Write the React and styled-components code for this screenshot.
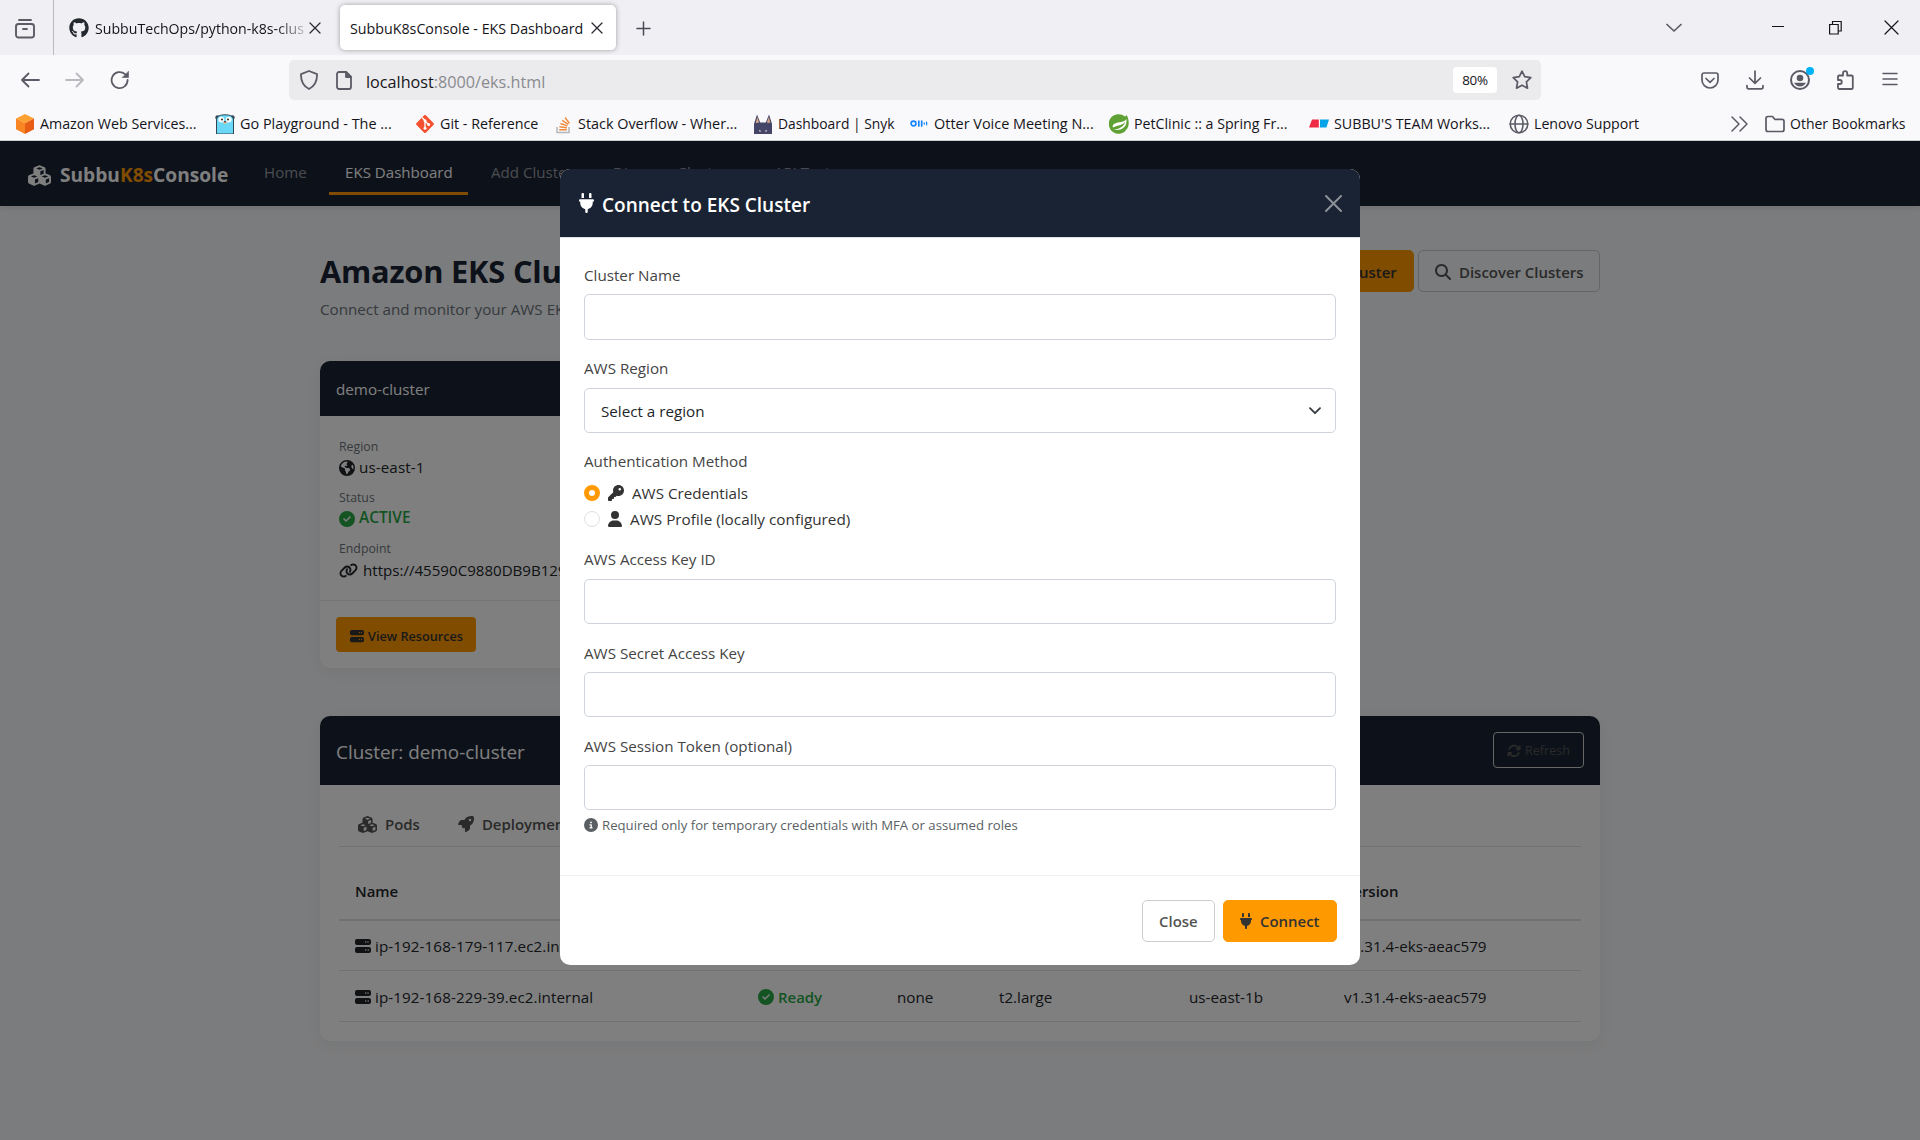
import React from "react";
import styled, { createGlobalStyle, css } from "styled-components";
import {
  FaCubes, FaPlug, FaKey, FaUser, FaEarthAmericas, FaCircleCheck, FaLink,
  FaServer, FaRocket, FaArrowsRotate, FaMagnifyingGlass, FaCircleInfo, FaGithub,
} from "react-icons/fa6";

const navy = "#1a2333";
const orange = "#ff9900";

const Global = createGlobalStyle`
  *, *::before, *::after { box-sizing: border-box; }
  html, body { margin: 0; padding: 0; }
  body {
    width: 1920px;
    height: 1140px;
    overflow: hidden;
    font-family: "Open Sans", "Noto Sans", sans-serif;
    font-size: 15px;
    color: #212529;
  }
  svg { display: block; flex: none; }
`;

const Screen = styled.div`
  width: 1920px;
  height: 1140px;
  display: flex;
  flex-direction: column;
  overflow: hidden;
`;

const Text = styled.span`
  display: block;
  flex: none;
  white-space: nowrap;
  font-size: ${(p) => p.$size || (p.$weight ? 14.95 : 15.2)}px;
  font-weight: ${(p) => p.$weight || 400};
  letter-spacing: ${(p) => p.$track || 0}px;
  color: ${(p) => p.$color || "inherit"};
  line-height: 24px;
`;

/* ---------- browser chrome ---------- */

const TabStrip = styled.div`
  height: 55px;
  flex: none;
  background: #f0f0f4;
  display: flex;
  color: #15141a;
`;

const ViewCell = styled.div`
  width: 54px;
  border-right: 1px solid #b9b9c0;
  padding: 19px 0 0 15px;
`;

const Tab = styled.div`
  display: flex;
  align-items: center;
  height: 45px;
  margin-top: 5px;
  border-radius: 5px;
  ${(p) =>
    p.$active
      ? css`
          width: 276px;
          margin-left: 2px;
          padding-left: 10px;
          background: #fff;
          box-shadow: 0 0 5px rgba(0, 0, 0, 0.35);
        `
      : css`
          width: 284px;
          padding-left: 15px;
        `}
`;

const TabLabel = styled(Text)`
  width: ${(p) => p.$width}px;
  margin: 2px 0 0 ${(p) => p.$left || 0}px;
  ${(p) => p.$fade && css`mask-image: linear-gradient(90deg, #000 86%, transparent 103%);`}
`;

const StripEnd = styled.div`
  flex: 1;
  display: flex;
  justify-content: space-between;
  padding: 20px 21px 0 20px;
`;

const WindowControls = styled.div`
  display: flex;
  align-items: flex-start;
`;

const Slot = styled.div`
  margin-left: ${(p) => p.$gap || 0}px;
  padding-bottom: ${(p) => p.$lift || 0}px;
`;

const Toolbar = styled.div`
  height: 50px;
  flex: none;
  background: #f9f9fb;
  display: flex;
  align-items: center;
  color: #5b5b66;
  padding: 0 22px 0 20px;
`;

const NavButtons = styled.div`
  display: flex;
  align-items: center;
  gap: 25px;
  width: 269px;
`;

const UrlBar = styled.div`
  width: 1252px;
  height: 40px;
  border-radius: 5px;
  background: #ebebed;
  display: flex;
  align-items: center;
  padding: 0 9px 0 10px;
  color: #5b5b66;
`;

const Url = styled(Text)`
  flex: 1;
  margin: 3px 0 0 14px;
  color: #8a8a8f;
  b {
    font-weight: 400;
    color: #15141a;
  }
`;

const ZoomPill = styled.div`
  width: 44px;
  height: 26px;
  margin-right: 15px;
  border-radius: 4px;
  background: #fff;
  color: #15141a;
  font-size: 13.4px;
  letter-spacing: -0.3px;
  line-height: 27px;
  text-align: center;
`;

const ToolbarIcons = styled.div`
  display: flex;
  align-items: center;
  margin-left: auto;
`;

const Bookmarks = styled.div`
  height: 36px;
  flex: none;
  background: #f9f9fb;
  border-bottom: 1px solid #c9cfca;
  display: flex;
  align-items: center;
  padding-left: 15px;
  color: #15141a;
`;

const Bookmark = styled.div`
  display: flex;
  align-items: center;
  gap: 5px;
  flex: 0 0 ${(p) => p.$width}px;
  height: 100%;
  padding-top: 2px;
  svg { width: 20px; height: 20px; }
`;

/* ---------- page ---------- */

const Page = styled.div`
  flex: 1;
  position: relative;
  background: #f7f8fa;
  overflow: hidden;
`;

const Navbar = styled.nav`
  height: 65px;
  background: ${navy};
  box-shadow: 0 2px 5px rgba(0, 0, 0, 0.1);
  display: flex;
  align-items: flex-start;
  padding-left: 28px;
`;

const Brand = styled.div`
  display: flex;
  align-items: center;
  width: 220px;
  height: 65px;
  gap: 9px;
  color: #fff;
  padding-top: 3px;
  em { font-style: normal; color: ${orange}; }
`;

const NavLink = styled.div`
  height: 41px;
  margin: 13px 7px 0 0;
  padding: 6px 0 0 16px;
  width: ${(p) => p.$width}px;
  color: ${(p) => (p.$active ? "#fff" : "rgba(255,255,255,0.55)")};
  border-bottom: 3px solid ${(p) => (p.$active ? orange : "transparent")};
`;

const Container = styled.main`
  width: 1280px;
  margin: 0 auto;
`;

const PageHead = styled.header`
  height: 155px;
  padding-top: 44px;
  display: flex;
  justify-content: space-between;
  align-items: flex-start;
`;

const Title = styled.h1`
  margin: 0 0 5px;
  font-size: 30.8px;
  line-height: 42px;
  font-weight: 700;
  letter-spacing: -0.2px;
  color: ${navy};
  white-space: nowrap;
`;

const Actions = styled.div`
  display: flex;
  gap: 4px;
`;

const Button = styled.div`
  height: 42px;
  display: flex;
  align-items: center;
  gap: 8px;
  width: ${(p) => p.$width}px;
  padding: ${(p) => p.$drop ?? 2}px 0 0 16px;
  border-radius: 5px;
  border: 1px solid ${(p) => (p.$primary ? orange : p.$edge || "#ccc")};
  background: ${(p) => (p.$primary ? orange : "transparent")};
  color: ${(p) => (p.$primary ? "#333" : "#545454")};
`;

/* The plug and user glyphs are narrower than their height. */
const PlugIcon = styled(FaPlug)`
  width: ${(p) => p.size * 0.75}px;
`;

const UserIcon = styled(FaUser)`
  width: ${(p) => p.size * 0.875}px;
`;

const Card = styled.section`
  width: ${(p) => p.$width}px;
  margin-bottom: 48px;
  border-radius: 10px;
  background: #fff;
  box-shadow: 0 4px 15px rgba(0, 0, 0, 0.05);
  overflow: hidden;
`;

const CardHead = styled.div`
  height: ${(p) => p.$height}px;
  background: ${navy};
  color: #fff;
  display: flex;
  align-items: center;
  justify-content: space-between;
  padding: 0 16px;
`;

const CardTitle = styled(Text)`
  margin-top: 3px;
`;

const Details = styled.div`
  height: 185px;
  padding: 20px 20px 0 19px;
  border-bottom: 1px solid #e6e8ea;
`;

const Detail = styled.div`
  height: 51px;
`;

const DetailLabel = styled(Text)`
  font-size: 12.3px;
  line-height: 22px;
  color: #6c757d;
`;

const IconText = styled.div`
  display: flex;
  align-items: center;
  gap: ${(p) => p.$gap ?? 4}px;
  color: ${(p) => p.$color || "inherit"};
`;

const DetailValue = styled(IconText)`
  height: 20px;
  ${Text} { margin-bottom: ${(p) => p.$rise ?? 2}px; }
`;

const CardFoot = styled.div`
  height: 67px;
  padding: 16px;
`;

const SmallButton = styled.div`
  width: 140px;
  height: 35px;
  border-radius: 4px;
  background: ${orange};
  color: #333;
  display: flex;
  align-items: center;
  gap: 4px;
  padding: 3px 0 0 14px;
`;

const RefreshButton = styled.div`
  width: 91px;
  height: 36px;
  margin-bottom: 2px;
  border: 1px solid #ccc;
  border-radius: 4px;
  color: #545454;
  display: flex;
  align-items: center;
  gap: 4px;
  padding: 2px 0 0 13px;
`;

const CardBody = styled.div`
  height: 256px;
  padding: 0 19px;
`;

const ResourceTabs = styled.div`
  height: 62px;
  border-bottom: 1px solid #dee2e6;
  display: flex;
  align-items: flex-start;
  padding: 27px 0 0 19px;
  gap: 38px;
  color: #545454;
`;

const Row = styled.div`
  display: grid;
  grid-template-columns: 403px 139px 102px 190px 155px 1fr;
  align-items: center;
  height: ${(p) => p.$height}px;
  padding-left: 16px;
  padding-top: ${(p) => p.$drop || 0}px;
  border-bottom: ${(p) => (p.$head ? 2 : 1)}px solid #dee2e6;
  color: #212529;
`;

/* ---------- modal ---------- */

const Backdrop = styled.div`
  position: absolute;
  inset: 0;
  background: rgba(0, 0, 0, 0.5);
  display: flex;
  justify-content: center;
  align-items: flex-start;
  padding-top: 28px;
`;

const Modal = styled.div`
  width: 800px;
  height: 796px;
  border-radius: 10px;
  background: #fff;
  overflow: hidden;
`;

const ModalHead = styled.div`
  height: 69px;
  background: ${navy};
  border-bottom: 1px solid #dee2e6;
  color: #fff;
  display: flex;
  justify-content: space-between;
  align-items: center;
  padding: 0 18px 0 19px;
`;

const ModalTitle = styled(Text)`
  margin-top: 4px;
`;

const ModalBody = styled.div`
  height: 638px;
  border-bottom: 1px solid #eef0f1;
  padding: 25px 24px 0;
`;

const Field = styled.div`
  height: ${(p) => p.$height || 93}px;
`;

const Label = styled(Text)`
  color: #454545;
  margin-bottom: ${(p) => p.$below ?? 7}px;
`;

const Input = styled.div`
  height: ${(p) => p.$height || 45}px;
  border: 1px solid #ced4da;
  border-radius: 5px;
  background: #fff;
  display: flex;
  align-items: center;
  justify-content: space-between;
  padding: 0 14px 0 16px;
`;

const RadioRow = styled.div`
  display: flex;
  align-items: center;
  height: 26px;
  color: #333;
`;

const Radio = styled.span`
  width: 16px;
  height: 16px;
  margin-right: 8px;
  border-radius: 50%;
  background: #fff;
  border: ${(p) => (p.$on ? `5px solid ${orange}` : "1px solid #e0e1e5")};
`;

const Help = styled(IconText)`
  margin-top: 3px;
  color: #5a5f64;
`;

const ModalFoot = styled.div`
  display: flex;
  justify-content: flex-end;
  gap: 8px;
  padding: 24px 23px 0;
`;

/* ---------- drawings ---------- */

const Stroke = ({ w, h, sw = 1.8, children, color = "currentColor" }) => (
  <svg width={w} height={h} viewBox={`0 0 ${w} ${h}`} fill="none" stroke={color}
    strokeWidth={sw} strokeLinecap="round" strokeLinejoin="round">{children}</svg>
);

const ViewIcon = () => (
  <Stroke w={20} h={20} sw={1.9} color="#5b5b66">
    <path d="M4 1h12" /><rect x="1" y="5" width="18" height="13.5" rx="2.5" /><path d="M8 10h4" />
  </Stroke>
);
const Cross = ({ size = 12, sw = 1.3, color = "#2b2a33" }) => (
  <Stroke w={size} h={size} sw={sw} color={color}>
    <path d={`M1 1L${size - 1} ${size - 1}M${size - 1} 1L1 ${size - 1}`} />
  </Stroke>
);
const Back = () => <Stroke w={20} h={16}><path d="M19 8H2M8.500 1.500L2 8l6.500 6.500" /></Stroke>;
const Forward = () => <Stroke w={20} h={16} color="#b9b9bf"><path d="M1 8h17M11.500 1.500L18 8l-6.500 6.500" /></Stroke>;
const Reload = () => (
  <Stroke w={20} h={20}>
    <path d="M17.600 10A8 8 0 1 1 15 4.200L17 6" />
    <path d="M18.500 1.500V7.500H12.500z" fill="currentColor" strokeWidth="0.600" />
  </Stroke>
);
const Shield = () => <Stroke w={20} h={20}><path d="M10 1L18 4.200C18.300 11 16 16 10 19 4 16 1.700 11 2 4.200z" /></Stroke>;
const PageIcon = () => (
  <Stroke w={16} h={19}>
    <path d="M3 1H10L15 6V16a2 2 0 0 1-2 2H3a2 2 0 0 1-2-2V3a2 2 0 0 1 2-2z" />
    <path d="M10 1V6H15z" fill="currentColor" />
  </Stroke>
);
const Star = () => (
  <Stroke w={20} h={20} sw={1.7}>
    <path d="M10 1.200L12.700 6.700 18.800 7.600 14.400 11.900 15.500 18.200 10 15.200 4.500 18.200 5.600 11.900 1.200 7.600 7.300 6.700z" />
  </Stroke>
);
const Pocket = () => (
  <Stroke w={18} h={17} sw={1.7}>
    <path d="M3 1h12a2 2 0 0 1 2 2v5a8 8 0 0 1-16 0V3a2 2 0 0 1 2-2z" /><path d="M5 6.500l4 3.800 4-3.800" />
  </Stroke>
);
const Download = () => (
  <Stroke w={18} h={20} sw={1.7}>
    <path d="M9 1v12M3.500 8L9 13.300 14.500 8M1 15.500V17a1.800 1.800 0 0 0 1.800 1.800h12.400A1.800 1.800 0 0 0 17 17v-1.500" />
  </Stroke>
);
const Account = () => (
  <svg width="24" height="26" viewBox="0 0 24 26">
    <circle cx="10" cy="14" r="9" fill="none" stroke="#5b5b66" strokeWidth="2" />
    <circle cx="10" cy="12" r="3.300" fill="#5b5b66" />
    <path d="M4 16.800h12c-1.200 2.400-3.400 3.600-6 3.600s-4.800-1.200-6-3.600z" fill="#5b5b66" />
    <circle cx="20" cy="5" r="4" fill="#00b3f4" />
  </svg>
);
const Extension = () => (
  <Stroke w={18} h={20} sw={1.8}>
    <path d="M2 6.500a1 1 0 0 1 1-1H7V3.200a2 2 0 0 1 4.200 0V5.500H15.500a1.300 1.300 0 0 1 1.300 1.300V17.700A1.300 1.300 0 0 1 15.500 19H3.300A1.300 1.300 0 0 1 2 17.700V14H3.800a1.900 1.900 0 0 0 0-4H2z" />
  </Stroke>
);
const Menu = () => <Stroke w={16} h={14} sw={1.5}><path d="M1 1.500h14M1 7h14M1 12.500h14" /></Stroke>;

const AwsBox = () => (
  <svg viewBox="0 0 20 20">
    <path d="M10 0l9 4.500-9 4.700-9-4.700z" fill="#ffa132" />
    <path d="M1 4.500l9 4.700V20l-9-4.700z" fill="#f98422" />
    <path d="M19 4.500l-9 4.700V20l9-4.700z" fill="#e85d13" />
  </svg>
);
const Gopher = () => (
  <svg viewBox="0 0 20 20">
    <circle cx="2.600" cy="3.500" r="2.300" fill="#31464f" /><circle cx="17.400" cy="3.500" r="2.300" fill="#31464f" />
    <path d="M1.500 20V6C2 2 5 .8 10 .8s8 1.200 8.500 5.200v14z" fill="#6cd8f7" stroke="#31464f" strokeWidth="1" />
    <circle cx="6.300" cy="5.600" r="2.900" fill="#fff" /><circle cx="13.700" cy="5.600" r="2.900" fill="#fff" />
    <circle cx="7" cy="5.600" r="1" fill="#222" /><circle cx="13" cy="5.600" r="1" fill="#222" />
    <ellipse cx="10" cy="8.600" rx="2" ry="1.400" fill="#e8c29a" /><ellipse cx="10" cy="7.700" rx="1" ry=".8" fill="#222" />
  </svg>
);
const GitMark = () => (
  <svg viewBox="0 0 20 20">
    <rect x="3.300" y="3.300" width="13.400" height="13.400" rx="1.200" transform="rotate(45 10 10)" fill="#f4502f" />
    <path d="M7 3.500l3 3v8M10 7l3.500 3.500" stroke="#fff" strokeWidth="1.300" fill="none" />
    <circle cx="10" cy="6.800" r="1.500" fill="#fff" /><circle cx="10" cy="14.300" r="1.500" fill="#fff" /><circle cx="13.600" cy="10.500" r="1.500" fill="#fff" />
  </svg>
);
const StackMark = () => (
  <svg viewBox="0 0 20 20">
    <path d="M4 13v5.500h12V13" fill="none" stroke="#b4b7ba" strokeWidth="1.500" />
    <path d="M6.200 15.800h7.600M6.400 12.800l7.500.9M7.400 9.500l7 2.300M9.200 6.300l6.100 4M12 3.500l4.400 5.700" stroke="#f08a3c" strokeWidth="1.400" />
  </svg>
);
const SnykMark = () => (
  <svg viewBox="0 0 20 20">
    <path d="M1 20V10L4 .5l3.200 8h5.600L16 .5l3 9.500v10z" fill="#454568" />
    <path d="M2.800 9L4.200 3l2 5.500z" fill="#d9a988" /><path d="M17.200 9L15.800 3l-2 5.500z" fill="#d9a988" />
    <path d="M6.500 16l.9 1.800M13.500 16l-.9 1.800" stroke="#d8cdd0" strokeWidth="1.200" />
  </svg>
);
const OtterMark = () => (
  <svg viewBox="0 0 20 20" fill="none" stroke="#1685ff" strokeLinecap="round">
    <circle cx="4.500" cy="9.500" r="2.400" strokeWidth="1.700" />
    <path d="M9.800 7v5M12.700 7v5" strokeWidth="1.700" /><path d="M15.300 9v1M17.600 8.200v2.600" strokeWidth="1.300" />
  </svg>
);
const SpringMark = () => (
  <svg viewBox="0 0 20 20">
    <path d="M17.600 1C20 5 20.600 10.500 18.200 14.500A9.800 9.800 0 1 1 16 2.600 6 6 0 0 0 17.600 1z" fill="#5fa134" />
    <path d="M17.400 5C18.500 12.500 13 17.200 5 15.800 12.500 14.800 15.300 11 16.200 7.800 13.500 11.500 9 11.200 4 13.500 2.500 9.500 8 8.500 12 8 15 7.600 16.600 6.400 17.400 5z" fill="#fff" />
  </svg>
);
const TeamMark = () => (
  <svg viewBox="0 0 20 20">
    <path d="M3 5.500h6.800v8H0z" fill="#ee2a45" /><path d="M11 5.500h9l-2.600 8H11z" fill="#05a4e8" />
  </svg>
);
const Globe = () => (
  <Stroke w={20} h={20} sw={1.600} color="#5b5b66">
    <circle cx="10" cy="10" r="8.800" /><ellipse cx="10" cy="10" rx="4" ry="8.800" /><path d="M1.200 10h17.600" />
  </Stroke>
);
const Folder = () => (
  <Stroke w={20} h={20} sw={1.700} color="#5b5b66">
    <path d="M3 2.500h4.500l2.300 2.800H17a2 2 0 0 1 2 2V15.500a2 2 0 0 1-2 2H3a2 2 0 0 1-2-2v-11a2 2 0 0 1 2-2z" />
  </Stroke>
);

const bookmarks = [
  [AwsBox, "Amazon Web Services...", 200, 14.25],
  [Gopher, "Go Playground - The ...", 200, 14.45],
  [GitMark, "Git - Reference", 138, 14.3],
  [StackMark, "Stack Overflow - Wher...", 200, 14.4],
  [SnykMark, "Dashboard | Snyk", 156, 13.85],
  [OtterMark, "Otter Voice Meeting N...", 200, 14.45],
  [SpringMark, "PetClinic :: a Spring Fr...", 200, 14.2],
  [TeamMark, "SUBBU'S TEAM Works...", 200, 14.25],
  [Globe, "Lenovo Support", 221, 14.2],
];

const Nav = ({ children, ...rest }) => <NavLink {...rest}><Text $size={15.1}>{children}</Text></NavLink>;

const NodeRow = ({ name, zone, height, drop }) => (
  <Row $height={height} $drop={drop}>
    <IconText><FaServer size={16} /><Text $track={0.09}>{name}</Text></IconText>
    <IconText $color="#28a745"><FaCircleCheck size={16} /><Text $weight={600}>Ready</Text></IconText>
    <Text>none</Text>
    <Text>t2.large</Text>
    <Text>{zone}</Text>
    <Text>v1.31.4-eks-aeac579</Text>
  </Row>
);

export default function App() {
  return (
    <Screen>
      <Global />
      <TabStrip>
        <ViewCell><ViewIcon /></ViewCell>
        <Tab>
          <FaGithub size={20} color="#24292f" />
          <TabLabel $size={14.15} $left={6} $width={211} $fade>SubbuTechOps/python-k8s-clus</TabLabel>
          <Slot $gap={3}><Cross /></Slot>
        </Tab>
        <Tab $active>
          <TabLabel $size={14.25} $width={234}>SubbuK8sConsole - EKS Dashboard</TabLabel>
          <Slot $gap={7}><Cross /></Slot>
        </Tab>
        <StripEnd>
          <Stroke w={15} h={17} sw={1.5} color="#4a4a55"><path d="M7.500 2v13M1 8.500h13" /></Stroke>
          <WindowControls>
            <Slot><Stroke w={16} h={15} sw={1.7} color="#5b5b66"><path d="M1 4.500l7 6.500 7-6.500" /></Stroke></Slot>
            <Slot $gap={90}><svg width="12" height="14"><path d="M0 6.500h12" stroke="#15141a" /></svg></Slot>
            <Slot $gap={45}>
              <svg width="13" height="15" fill="none" stroke="#15141a" strokeWidth="1.200">
                <path d="M.6 4.500h8.600v9.500H.6zM3.500 4.500v-3h8.700v9.500H9.200" />
              </svg>
            </Slot>
            <Slot $gap={42}><Cross size={15} sw={1.2} color="#15141a" /></Slot>
          </WindowControls>
        </StripEnd>
      </TabStrip>

      <Toolbar>
        <NavButtons><Back /><Forward /><Reload /></NavButtons>
        <UrlBar>
          <Shield />
          <Slot $gap={17}><PageIcon /></Slot>
          <Url $size={16.2}><b>localhost</b>:8000/eks.html</Url>
          <ZoomPill>80%</ZoomPill>
          <Star />
        </UrlBar>
        <ToolbarIcons>
          <Pocket />
          <Slot $gap={27}><Download /></Slot>
          <Slot $gap={26} $lift={2}><Account /></Slot>
          <Slot $gap={22}><Extension /></Slot>
          <Slot $gap={28} $lift={2}><Menu /></Slot>
        </ToolbarIcons>
      </Toolbar>

      <Bookmarks>
        {bookmarks.map(([Icon, name, width, size]) => (
          <Bookmark key={name} $width={width}><Icon /><Text $size={size}>{name}</Text></Bookmark>
        ))}
        <Bookmark $width={35}>
          <Stroke w={20} h={20} sw={1.5} color="#5b5b66"><path d="M2 3l7 7-7 7M10 3l7 7-7 7" /></Stroke>
        </Bookmark>
        <Bookmark $width={150}><Folder /><Text $size={14}>Other Bookmarks</Text></Bookmark>
      </Bookmarks>

      <Page>
        <Navbar>
          <Brand>
            <FaCubes size={23} />
            <Text $size={19.15} $weight={700}>Subbu<em>K8s</em>Console</Text>
          </Brand>
          <Nav $width={74}>Home</Nav>
          <Nav $width={139} $active>EKS Dashboard</Nav>
          <Nav $width={115}>Add Cluster</Nav>
          <Nav $width={154}>Discover Clusters</Nav>
          <Nav $width={100}>API Test</Nav>
        </Navbar>

        <Container>
          <PageHead>
            <div>
              <Title>Amazon EKS Clusters</Title>
              <Text $color="#6c757d">Connect and monitor your AWS EKS clusters</Text>
            </div>
            <Actions>
              <Button $primary $width={169}><PlugIcon size={16} /><Text $weight={600}>Connect Cluster</Text></Button>
              <Button $width={182} $edge="#c9cbce"><FaMagnifyingGlass size={16} /><Text $weight={600}>Discover Clusters</Text></Button>
            </Actions>
          </PageHead>

          <Card $width={411}>
            <CardHead $height={55}><Text>demo-cluster</Text></CardHead>
            <Details>
              <Detail>
                <DetailLabel>Region</DetailLabel>
                <DetailValue><FaEarthAmericas size={16} /><Text $track={0.1}>us-east-1</Text></DetailValue>
              </Detail>
              <Detail>
                <DetailLabel>Status</DetailLabel>
                <DetailValue $color="#28a745"><FaCircleCheck size={16} /><Text $weight={600} $size={15.4}>ACTIVE</Text></DetailValue>
              </Detail>
              <Detail>
                <DetailLabel>Endpoint</DetailLabel>
                <DetailValue $gap={5} $rise={0}><FaLink size={19} /><Text $size={15.1}>https://45590C9880DB9B129</Text></DetailValue>
              </Detail>
            </Details>
            <CardFoot>
              <SmallButton><FaServer size={14} /><Text $size={12.7} $weight={600}>View Resources</Text></SmallButton>
            </CardFoot>
          </Card>

          <Card $width={1280}>
            <CardHead $height={69}>
              <CardTitle $size={18.9}>Cluster: demo-cluster</CardTitle>
              <RefreshButton><FaArrowsRotate size={14} /><Text $size={12.6}>Refresh</Text></RefreshButton>
            </CardHead>
            <CardBody>
              <ResourceTabs>
                <IconText $gap={8}><FaCubes size={19} /><Text $weight={600}>Pods</Text></IconText>
                <IconText $gap={8}><FaRocket size={16} /><Text $weight={600}>Deployments</Text></IconText>
              </ResourceTabs>
              <Row $head $height={74} $drop={16}>
                <Text $weight={600}>Name</Text>
                <Text $weight={600}>Status</Text>
                <Text $weight={600}>Roles</Text>
                <Text $weight={600}>Instance Type</Text>
                <Text $weight={600}>Zone</Text>
                <Text $weight={600}>Version</Text>
              </Row>
              <NodeRow name="ip-192-168-179-117.ec2.internal" zone="us-east-1a" height={50} drop={1} />
              <NodeRow name="ip-192-168-229-39.ec2.internal" zone="us-east-1b" height={51} drop={2} />
            </CardBody>
          </Card>
        </Container>

        <Backdrop>
          <Modal>
            <ModalHead>
              <IconText $gap={8}><PlugIcon size={20} /><ModalTitle $size={19} $weight={600}>Connect to EKS Cluster</ModalTitle></IconText>
              <Cross size={17} sw={2} color="#8c9199" />
            </ModalHead>
            <ModalBody>
              <Field><Label>Cluster Name</Label><Input $height={46} /></Field>
              <Field>
                <Label $below={8}>AWS Region</Label>
                <Input>
                  <Text>Select a region</Text>
                  <Stroke w={12} h={8} sw={1.8} color="#343a40"><path d="M1 1.200l5 5 5-5" /></Stroke>
                </Input>
              </Field>
              <Field $height={98}>
                <Label>Authentication Method</Label>
                <RadioRow>
                  <Radio $on /><FaKey size={16} /><Slot $gap={8}><Text>AWS Credentials</Text></Slot>
                </RadioRow>
                <RadioRow>
                  <Radio /><UserIcon size={16} /><Slot $gap={8}><Text $size={15.3}>AWS Profile (locally configured)</Text></Slot>
                </RadioRow>
              </Field>
              <Field $height={94}><Label $below={8}>AWS Access Key ID</Label><Input /></Field>
              <Field><Label>AWS Secret Access Key</Label><Input /></Field>
              <Field>
                <Label>AWS Session Token (optional)</Label>
                <Input />
                <Help>
                  <FaCircleInfo size={14} />
                  <Text $size={13.2}>Required only for temporary credentials with MFA or assumed roles</Text>
                </Help>
              </Field>
            </ModalBody>
            <ModalFoot>
              <Button $drop={0} $width={73}><Text $weight={600}>Close</Text></Button>
              <Button $drop={0} $primary $width={114}><PlugIcon size={16} /><Text $weight={600}>Connect</Text></Button>
            </ModalFoot>
          </Modal>
        </Backdrop>
      </Page>
    </Screen>
  );
}
